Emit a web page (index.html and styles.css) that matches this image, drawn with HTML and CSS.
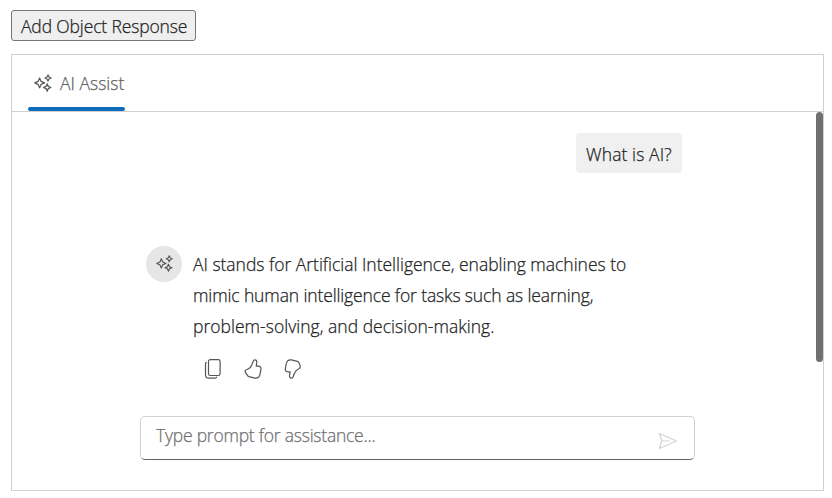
FILE: index.html
```html
<!DOCTYPE html>
<html lang="en">
<head>
<meta charset="utf-8">
<title>AI Assist</title>
<link rel="stylesheet" href="styles.css">
</head>
<body>
<svg class="defs" aria-hidden="true">
  <symbol id="sparkles" viewBox="0 0 18 18">
    <path d="M5.6 4L7.1 7.4L10.5 8.9L7.1 10.4L5.6 13.8L4.1 10.4L.7 8.9L4.1 7.4ZM14 .9L15 3L17.1 4L15 5L14 7.1L13 5L10.9 4L13 3ZM13.2 9.8L14.3 12.4L16.9 13.5L14.3 14.6L13.2 17.2L12.1 14.6L9.5 13.5L12.1 12.4Z"/>
  </symbol>
</svg>
<button class="add-button" type="button"><span class="add-text">Add Object Response</span></button>
<main class="assist">
  <header class="toolbar">
    <div class="tab">
      <svg class="icon tab-icon"><use href="#sparkles"/></svg>
      <span class="tab-text">AI Assist</span>
    </div>
  </header>
  <div class="view">
    <div class="conversation">
      <div class="prompt"><span class="prompt-text">What is AI?</span></div>
      <div class="response">
        <div class="avatar"><svg class="icon avatar-icon"><use href="#sparkles"/></svg></div>
        <div class="output">
          <p class="answer"><span class="line-one">AI stands for Artificial Intelligence, enabling machines to</span><br><span class="line-two">mimic human intelligence for tasks such as learning,</span><br><span class="line-three">problem-solving, and decision-making.</span></p>
          <div class="actions">
            <svg class="icon action" viewBox="0 0 20 20"><rect x="4.5" y=".6" width="11.6" height="15.9" rx="1.8"/><path d="M2.2 3.5Q1.5 4 1.5 5V16Q1.5 19.2 4.8 19.2H10.5Q12 19.2 12.6 18.2"/></svg>
            <svg class="icon action" viewBox="0 0 20 20"><path d="M10.8.8Q13.2.8 12.7 4L12.2 7.2H14.2Q17.4 7.2 16.9 10.6L16 15.4Q15 19.8 10.8 19.1L5 17.7Q3.7 17.3 3.1 15.8L1.3 13.4Q.6 11.2 2.8 10.5Q6.5 9.5 8.1 5.3L9.2 2.2Q9.6.8 10.8.8Z"/></svg>
            <svg class="icon action" viewBox="0 0 20 20"><path d="M8.5 19.2Q6.1 19.2 6.6 16L7.1 12.8H5.1Q1.9 12.8 2.4 9.4L3.3 4.6Q4.3.2 8.5.9L14.3 2.3Q15.6 2.7 16.2 4.2L17.1 6.6Q17.7 8.8 15.9 9.8Q12.8 11 11.2 14.7L10.1 17.8Q9.7 19.2 8.5 19.2Z"/></svg>
          </div>
        </div>
      </div>
    </div>
    <div class="composer">
      <span class="placeholder">Type prompt for assistance...</span>
      <svg class="icon send" viewBox="0 0 20 20"><path d="M1.5 2.5L18.5 10L1.5 17.5L3.7 10ZM3.7 10H11.5"/></svg>
    </div>
    <div class="scroll-thumb"></div>
  </div>
</main>
</body>
</html>
```
FILE: styles.css
```css
* { box-sizing: border-box; }
body {
  margin: 0;
  padding: 10px 8px 7px 11px;
  height: 498px;
  overflow: hidden;
  background: #fff;
  color: #242424;
  font: 300 17.5px/31px "Open Sans", sans-serif;
  -webkit-text-stroke: 0.25px currentColor;
  white-space: nowrap;
}
.defs { position: absolute; width: 0; height: 0; }
.icon { display: block; flex: none; fill: none; stroke: #555; stroke-width: 1.2; stroke-linejoin: round; stroke-linecap: round; }
.add-button {
  display: block;
  width: 185px;
  height: 31px;
  padding: 2px 0 0 9px;
  border: 1px solid #767676;
  border-radius: 3px;
  background: #efefef;
  color: #242424;
  font: inherit;
  line-height: 27px;
  text-align: left;
}
.add-text { letter-spacing: -0.14px; }
.prompt-text { letter-spacing: 0.1px; }
.line-one { letter-spacing: -0.02px; }
.line-two { letter-spacing: -0.13px; }
.line-three { letter-spacing: 0.02px; }
.placeholder { letter-spacing: -0.23px; }
.assist { width: 813px; height: 437px; margin-top: 13px; border: 1px solid #d1d1d1; }
.toolbar { height: 57px; padding-left: 16px; border-bottom: 1px solid #d1d1d1; }
.tab {
  position: relative;
  display: flex;
  align-items: center;
  width: 97px;
  height: 56px;
  padding-left: 6px;
  color: #616161;
}
.tab::after {
  content: "";
  position: absolute;
  left: -0.5px;
  right: 0.5px;
  bottom: 0;
  height: 4px;
  border-radius: 2px;
  background: #0f6cbd;
}
.tab-icon { width: 18px; height: 18px; margin: 0 8.5px 0 -0.5px; }
.view { position: relative; height: 378px; padding: 21px 129px 0 128px; }
.conversation { height: 283px; padding: 0 12px 0 6px; }
.prompt {
  width: 106px;
  height: 40px;
  margin-left: auto;
  padding: 6px 0 0 10px;
  border-radius: 4px;
  background: #f0f0f0;
}
.response { display: flex; margin-top: 73px; }
.avatar {
  display: grid;
  place-items: center;
  width: 36px;
  height: 36px;
  margin-right: 11px;
  border-radius: 50%;
  background: #e6e6e6;
}
.avatar-icon { width: 17px; height: 17px; margin-top: -2px; }
.answer { margin: 3px 0 0; }
.actions { display: flex; gap: 20px; padding: 17px 0 0 11px; }
.action { width: 20px; height: 20px; }
.action:last-child { margin-left: -1px; }
.composer {
  display: flex;
  justify-content: space-between;
  width: 555px;
  height: 44px;
  padding: 3px 16px 0 15px;
  border: 1px solid #d1d1d1;
  border-bottom-color: #616161;
  border-radius: 5px;
  color: #707070;
}
.send { width: 20px; height: 20px; margin-top: 11px; stroke: #d4d4d4; }
.scroll-thumb {
  position: absolute;
  top: 0;
  right: 0;
  width: 7px;
  height: 250px;
  border-radius: 4px;
  background: #707070;
}
```
